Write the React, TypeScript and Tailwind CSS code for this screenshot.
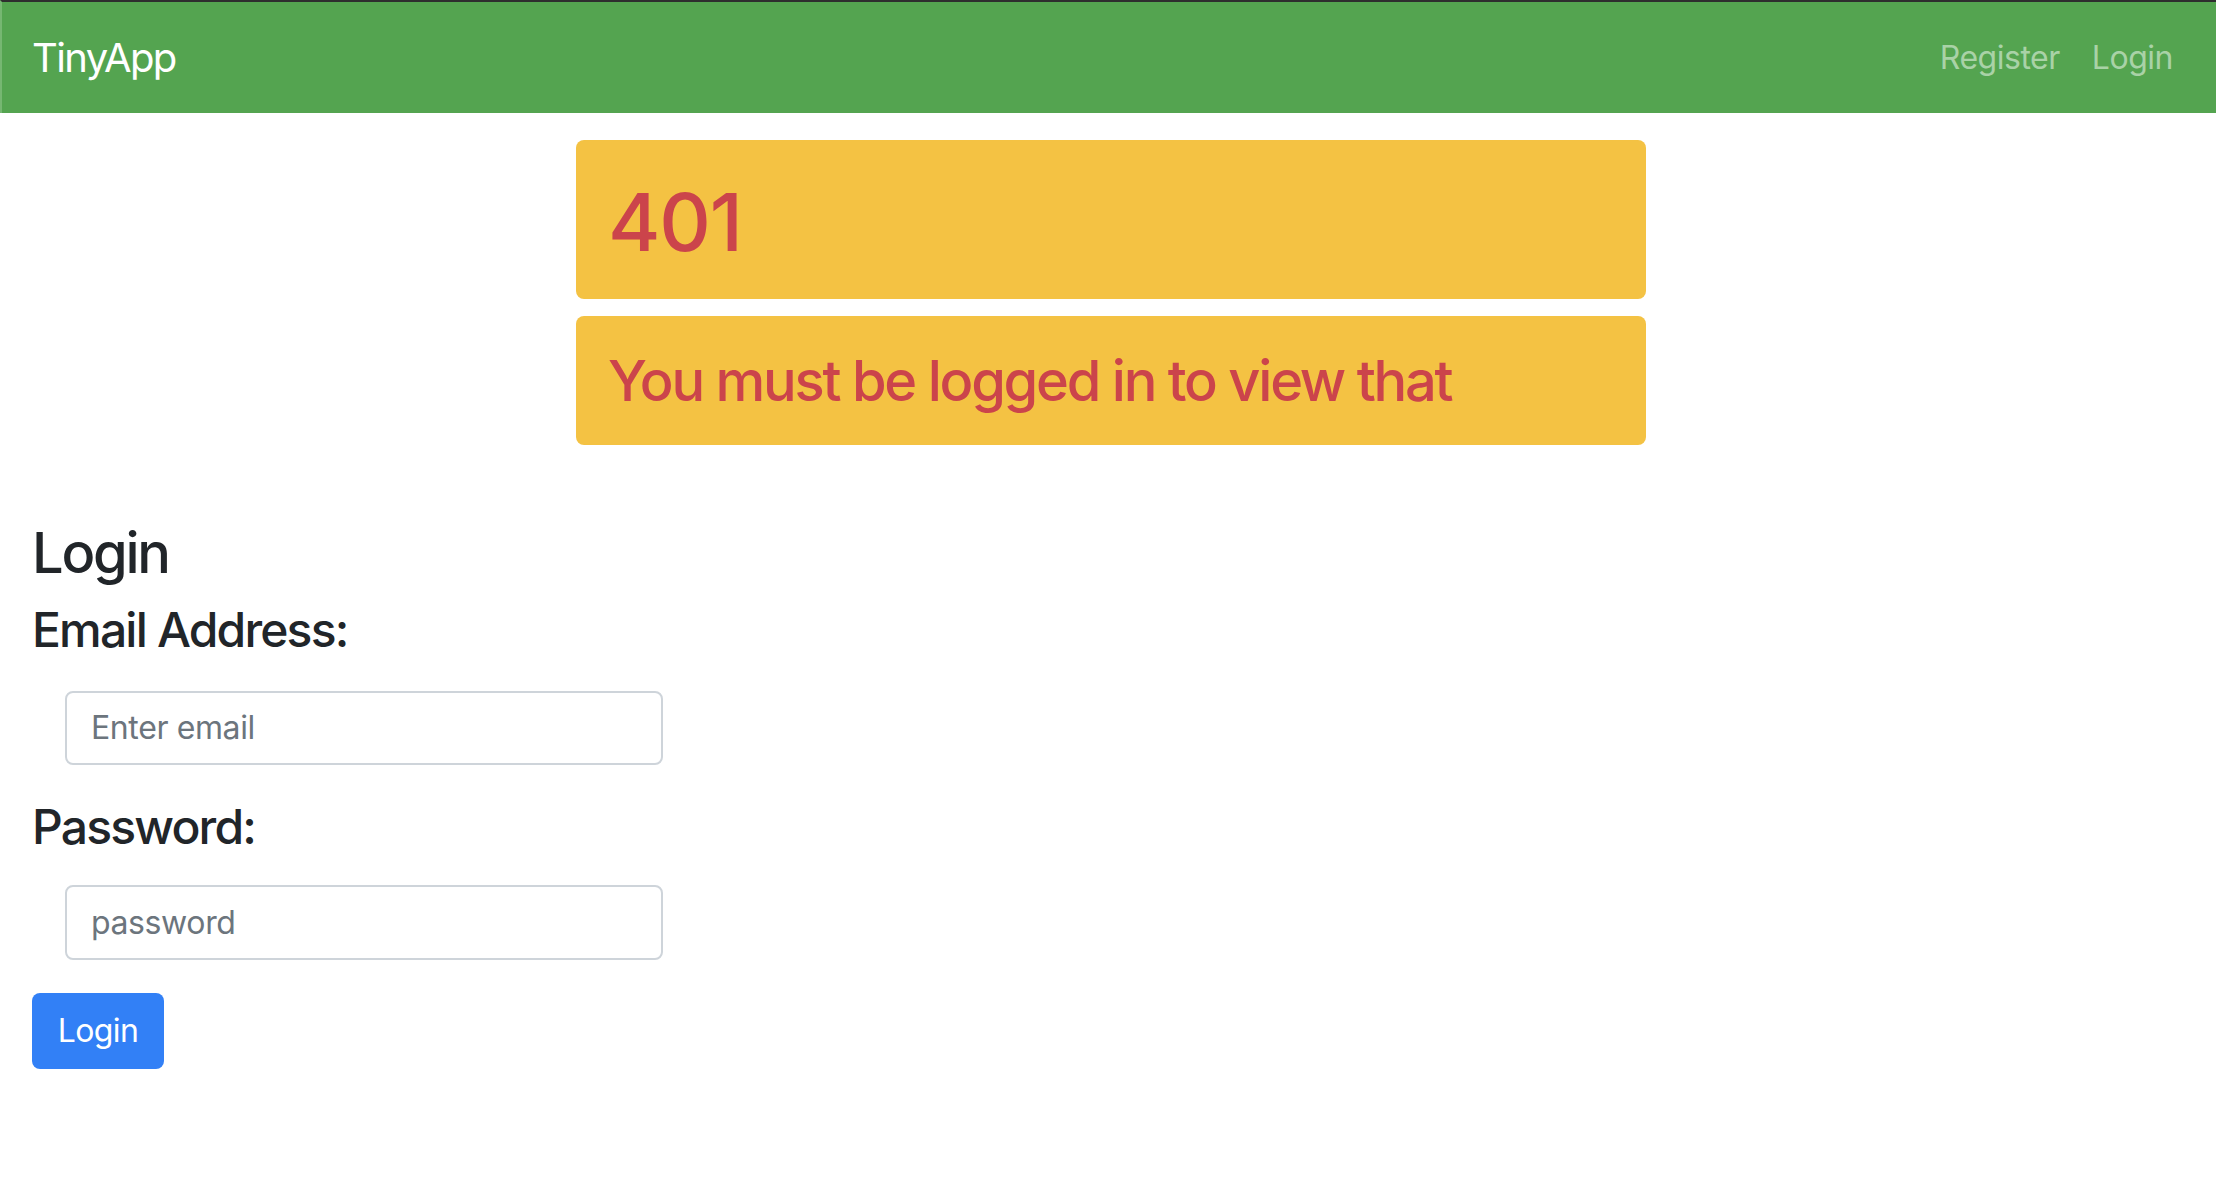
import React from "react";

export default function App() {
  return (
    <div className="min-h-[1202px] w-full bg-white" style={{ fontFamily: "Inter, 'Liberation Sans', sans-serif" }}>
      <nav className="flex h-[113px] items-center justify-between border-t-2 border-l-2 border-t-[#2e2e2e] border-l-[#76b772] bg-[#54a450] pl-[30px] pr-[27px]">
        <a className="text-[40px] leading-none tracking-[-0.04em] text-white">TinyApp</a>
        <div className="flex items-center">
          <a className="px-[16px] text-[32px] leading-none tracking-[-0.015em] text-[#a9d2a7]">Register</a>
          <a className="px-[16px] text-[32px] leading-none tracking-[-0.015em] text-[#a9d2a7]">Login</a>
        </div>
      </nav>

      <div className="ml-[576px] mt-[27px] flex w-[1070px] flex-col gap-[17px]">
        <div className="h-[159px] rounded-[8px] bg-[#f4c243] px-[32px] pt-[34px]">
          <h1 className="text-[80px] font-medium leading-[1.2] tracking-[-0.015em] text-[#cb444b]">401</h1>
        </div>
        <div className="h-[129px] rounded-[8px] bg-[#f4c243] px-[32px] pt-[32px]">
          <h3 className="text-[56px] font-medium leading-[1.2] tracking-[-0.04em] text-[#cb444b]">You must be logged in to view that</h3>
        </div>
      </div>

      <form className="flex flex-col px-[32px] text-[#212529]">
        <h2 className="mt-[75px] text-[56px] font-medium leading-[1.2] tracking-[-0.04em]">Login</h2>
        <label className="mt-[14px] text-[48px] font-medium leading-[1.2] tracking-[-0.038em]">Email Address:</label>
        <input
          type="email"
          placeholder="Enter email"
          className="ml-[33px] mt-[32px] h-[74px] w-[598px] rounded-[8px] border-2 border-[#ced4da] bg-white px-[24px] text-[32px] tracking-[-0.012em] text-[#495057] outline-none placeholder:text-[#6c757d]"
        />
        <label className="mt-[33px] text-[48px] font-medium leading-[1.2] tracking-[-0.038em]">Password:</label>
        <input
          type="password"
          placeholder="password"
          className="ml-[33px] mt-[30px] h-[75px] w-[598px] rounded-[8px] border-2 border-[#ced4da] bg-white px-[24px] text-[32px] tracking-[-0.012em] text-[#495057] outline-none placeholder:text-[#6c757d]"
        />
        <div className="mt-[33px]">
          <button type="button" className="flex h-[76px] w-[132px] items-center justify-center rounded-[8px] bg-[#3280f6] text-[32px] tracking-[-0.02em] text-white">
            Login
          </button>
        </div>
      </form>
    </div>
  );
}
